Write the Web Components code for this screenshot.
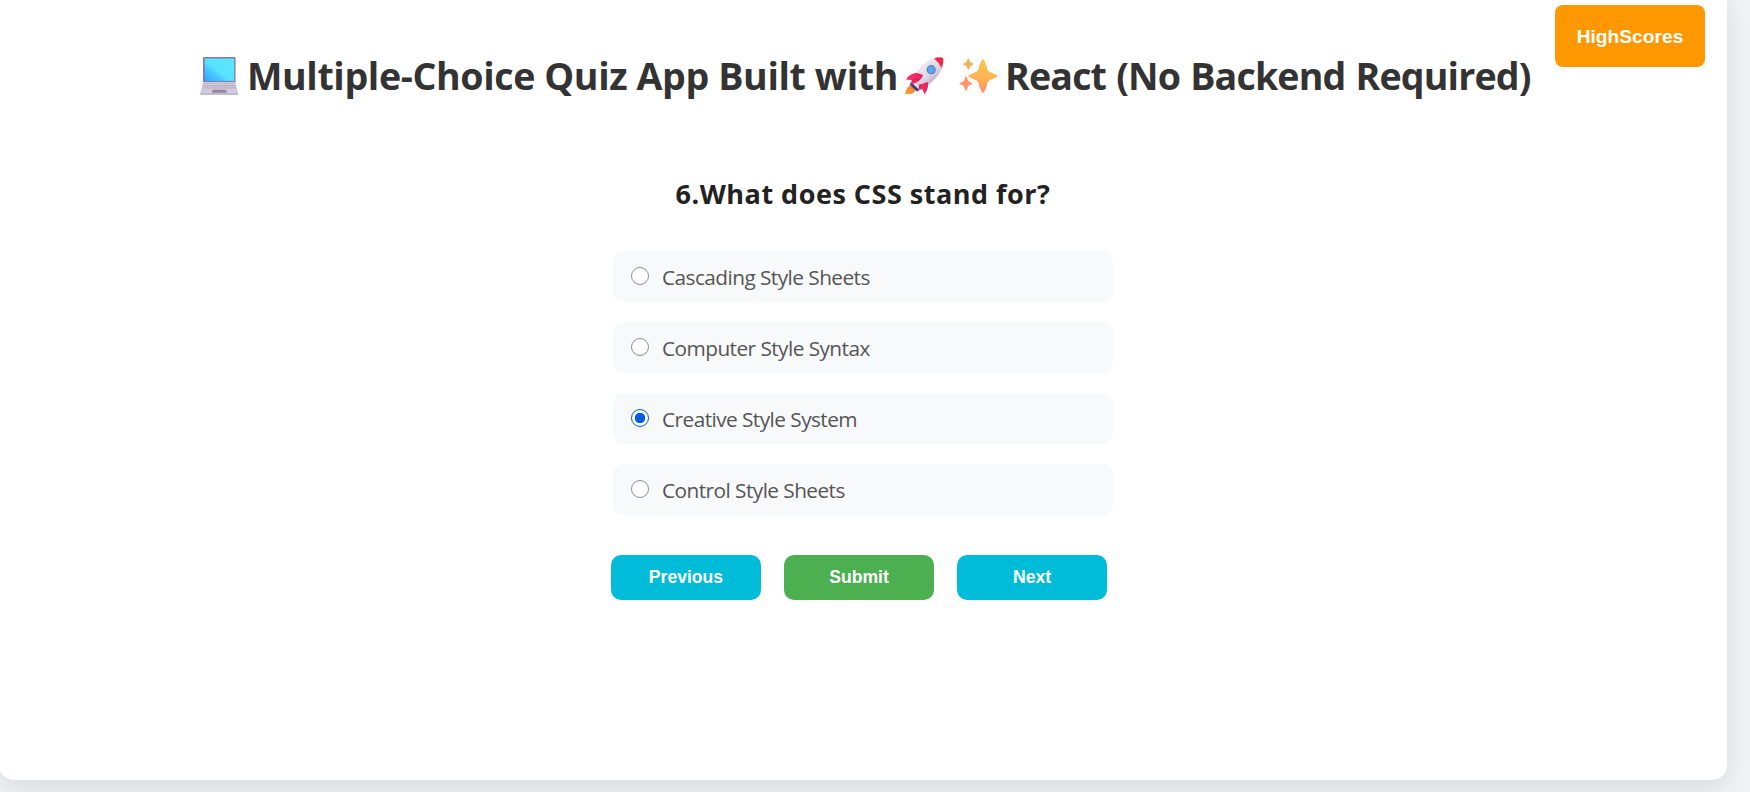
<!DOCTYPE html>
<html lang="en">
<head>
<meta charset="utf-8">
<title>Quiz App</title>
<style>
html,body{margin:0;height:792px;overflow:hidden;background:#f0f4f5;font-family:"Open Sans","Noto Sans",sans-serif}
</style>
</head>
<body>
<quiz-app></quiz-app>
<script>
const define=(name,html)=>{
  const t=document.createElement('template');t.innerHTML=html;
  customElements.define(name,class extends HTMLElement{
    constructor(){super();this.attachShadow({mode:'open'}).append(t.content.cloneNode(true));}
  });
};
define('icon-laptop',`<style>:host{display:block;flex:none;width:39px;height:38px}svg{display:block}</style>
<svg width="39" height="38" viewBox="0 0 39 38"><defs><linearGradient id="s" x1="0" y1="1" x2="1" y2="0"><stop offset="0" stop-color="#35a4fb"/><stop offset=".3" stop-color="#46c6ff"/><stop offset=".45" stop-color="#58e2ff"/><stop offset="1" stop-color="#5ae8ff"/></linearGradient></defs>
<rect x="3" y="0" width="32.500" height="26" rx="1.200" fill="#8177b4"/><rect x="4.600" y="1.500" width="29.600" height="22.500" fill="url(#s)"/>
<path d="M3 25h32.500l2.600 11.500q0 1-1 1H1q-1 0-1-1z" fill="#d3cadd"/><path d="M4 26.200h30.800l1 5.200H3z" fill="#b9afc3"/><path d="M4 27.500h31M3.500 29.900h32" stroke="#e0d9e6" stroke-width="1" stroke-dasharray="1.500 .6"/><path d="M12.800 32.800h13.200l.8 3H12z" fill="#9188a2"/><path d="M.3 37.100h37.600" stroke="#a79ab9" stroke-width=".9"/></svg>`);
define('icon-rocket',`<style>:host{display:block;flex:none;width:39px;height:38px}svg{display:block}</style>
<svg width="39" height="38" viewBox="0 0 39 38"><defs><linearGradient id="b" x1=".3" y1=".2" x2=".75" y2=".75"><stop offset="0" stop-color="#eee8ee"/><stop offset=".6" stop-color="#dfd6e4"/><stop offset="1" stop-color="#bcaccb"/></linearGradient><linearGradient id="f" x1="0" y1="0" x2="1" y2="0"><stop offset="0" stop-color="#f8366e"/><stop offset="1" stop-color="#e81f5c"/></linearGradient><linearGradient id="o" x1="1" y1="0" x2="0" y2="1"><stop offset="0" stop-color="#f27b38"/><stop offset="1" stop-color="#ffa02d"/></linearGradient></defs>
<path d="M6 28Q1 30 0 37.500q5-1 6-.5 4-1 5-5z" fill="url(#o)"/>
<path d="M6.500 25.500l8 7.500-2.500 1.500-7.500-7z" fill="#3d3a85"/>
<path d="M30 1.300Q20 3 12.500 14L7 25l7.500 7L23 28q11-8 14.500-18.500z" fill="url(#b)"/>
<path d="M29.200 1.500Q33-.2 37 .6q1.300.3 1.400 2 0 5-1.800 8.400-2.600-5.500-7.400-9.500z" fill="#f1284b"/>
<path d="M12 15.800Q4.500 16.500 1 22.500l6 .8L4.700 28l6.800-2.500q5-2.500 6.500-7.500z" fill="url(#f)"/>
<path d="M23 25.200q1 6-3.500 12.300L17.500 32l-4.500 1 3-5.500q3-2 7-2.300z" fill="url(#f)"/>
<path d="M7 23l7-1M14.500 32l1-5" stroke="#e2205c" stroke-width="2"/>
<circle cx="26.200" cy="12.700" r="4.600" fill="#6c7b9c"/><circle cx="26.200" cy="12.700" r="3.400" fill="#4eaaff"/></svg>`);
define('icon-sparkles',`<style>:host{display:block;flex:none;width:39px;height:38px}svg{display:block}</style>
<svg width="39" height="38" viewBox="0 0 39 38"><defs><linearGradient id="g" x1=".6" y1="0" x2=".4" y2="1"><stop offset="0" stop-color="#fcc64a"/><stop offset=".55" stop-color="#fdb457"/><stop offset="1" stop-color="#ff8d68"/></linearGradient></defs>
<path d="M22.700 3.200q1.300-2 2.600 0 1.500 3 3.200 9.300Q29 14 30.500 14.800l7 3.200q1.800 1 0 2.200l-7 3.200Q29 24 28.500 25.500 27 32 25.300 34.800q-1.300 2-2.600 0-2-3-3.400-9.300-.5-1.500-2-2.100l-7-3.200q-1.800-1.200 0-2.200l7-3.200q1.500-.8 2-2.300 1.400-6.300 3.400-9.300z" fill="url(#g)"/>
<path d="M9.300 1.500q.8 0 1.200 2 .4 1.700 2 2.300 2.200.7 2.200 1.300t-2.200 1.300q-1.600.6-2 2.300-.4 2-1.200 2t-1.200-2q-.4-1.700-2-2.300-2-.7-2-1.300t2-1.300q1.600-.6 2-2.300.4-2 1.200-2z" fill="#efb458"/><path d="M7 19.200q1 0 1.500 3 .4 2.200 2.200 2.800 2.700.8 2.700 1.500t-2.700 1.500q-1.800.7-2.200 2.900-.5 3-1.500 3t-1.500-3Q5.100 28.700 3.300 28 .5 27.200.5 26.500T3.300 25q1.800-.6 2.200-2.800.5-3 1.500-3z" fill="#fd9866"/></svg>`);
define('score-button',`<style>:host{display:block}button{display:block;width:150px;height:62px;padding:1px 0 0;border:0;border-radius:8px;background:#ff9800;color:#fff;font:bold 19.2px "Liberation Sans",Arial,sans-serif}</style><button><slot></slot></button>`);
define('nav-button',`<style>:host{display:block}button{display:block;width:150px;height:45px;padding:0;border:0;border-radius:10px;background:var(--fill,#00bcd8);color:#fff;font:bold 17.6px "Liberation Sans",Arial,sans-serif}</style><button><slot></slot></button>`);
define('quiz-title',`<style>:host{display:block}h1{display:flex;align-items:center;margin:0;height:52px;color:#333;font-size:37.6px;line-height:52px;font-weight:700;white-space:nowrap}
span{padding-bottom:1px}
.a{margin-left:8px;width:650px;letter-spacing:-.39px}.b{margin-left:7px;letter-spacing:-.86px;word-spacing:1.2px}icon-sparkles{margin-left:15px}icon-rocket{margin-left:8px}</style>
<h1><icon-laptop></icon-laptop><span class="a">Multiple-Choice Quiz App Built with</span><icon-rocket></icon-rocket><icon-sparkles></icon-sparkles><span class="b">React (No Backend Required)</span></h1>`);
define('quiz-option',`<style>:host{display:flex;align-items:center;box-sizing:border-box;width:500px;height:51px;padding-left:18px;border-radius:10px;background:#f8f9fb;color:#555}
i{box-sizing:border-box;width:18px;height:18px;border:1px solid #8f8f9d;border-radius:50%;background:#fff;margin:-1px 13px 0 0}
:host([checked]) i{border:1.500px solid #0060df;background:radial-gradient(circle,#0060df 4.900px,#fff 5.500px)}
span{font-size:20.8px;line-height:28px;letter-spacing:-.55px;white-space:nowrap}</style><i></i><span><slot></slot></span>`);
define('quiz-question',`<style>:host{display:block}h2{margin:0 0 38px;text-align:center;font-size:27px;line-height:39px;color:#222;letter-spacing:.5px}.o{display:grid;gap:20px}</style>
<h2><slot name="title"></slot></h2><div class="o"><slot></slot></div>`);
define('quiz-app',`<style>
:host{display:block}
main{box-sizing:border-box;width:1728px;height:795px;margin:-15px 0 0 -1px;border-radius:15px;background:#fff;box-shadow:0 10px 30px rgba(0,0,0,.1);display:flex;flex-direction:column}
header{display:flex;justify-content:flex-end;padding:20px 22px 0 0;height:47px;box-sizing:border-box}
quiz-title{margin:18px 0 0 201px;height:52px}
quiz-question{width:500px;margin:72px 0 0 614px}
nav{display:flex;gap:23px;margin:40px 0 0 612px}
</style>
<main><header><score-button>HighScores</score-button></header>
<quiz-title></quiz-title>
<quiz-question><span slot="title">6.What does CSS stand for?</span>
<quiz-option>Cascading Style Sheets</quiz-option><quiz-option>Computer Style Syntax</quiz-option><quiz-option checked>Creative Style System</quiz-option><quiz-option>Control Style Sheets</quiz-option></quiz-question>
<nav><nav-button>Previous</nav-button><nav-button style="--fill:#4caf50">Submit</nav-button><nav-button>Next</nav-button></nav></main>`);
</script>
</body>
</html>
